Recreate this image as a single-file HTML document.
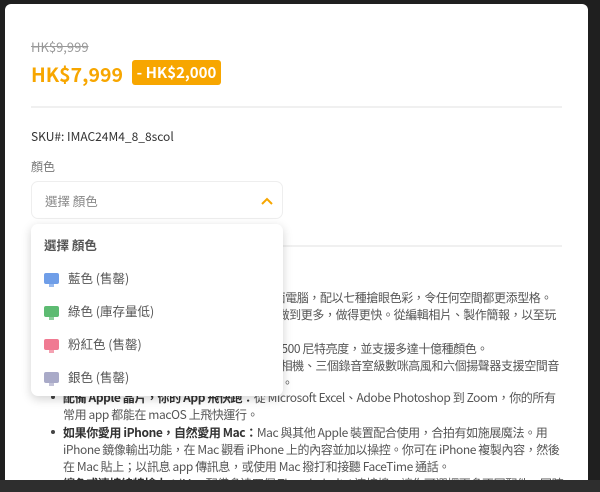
<!DOCTYPE html>
<html><head><meta charset="utf-8"><style>
*{margin:0;padding:0;box-sizing:border-box}
body{width:600px;height:492px;background:#1f1f1f;position:relative;overflow:hidden;font-family:"Noto Sans CJK TC","Liberation Sans",sans-serif}
.bot{position:absolute;left:0;top:480px;width:600px;height:12px;background:#2e2e2e}
.card{position:absolute;left:5px;top:4px;width:583px;height:476px;background:#fff;border-radius:6px 6px 0 0;overflow:hidden}
.a{position:absolute;white-space:nowrap;line-height:17px}
.t{font-size:12px;letter-spacing:-0.4px;color:#555;line-height:17px}
.t b{font-weight:bold;color:#333}
.hr{position:absolute;height:2px;background:#f0f0f0}
.dd{position:absolute;left:26px;top:220px;width:252px;height:172px;background:#fff;border-radius:7px;box-shadow:0 3px 10px rgba(0,0,0,.18)}
.it{position:absolute;left:13px;font-size:12.5px;color:#555;line-height:17px}
.ic{display:inline-block;width:15px;height:11px;border-radius:2px;vertical-align:-1px;margin-right:9px;position:relative}
.ic:after{content:"";position:absolute;left:5px;top:11px;width:5px;height:3px;background:inherit;opacity:.7}
.dot{position:absolute;left:46px;width:4px;height:4px;border-radius:50%;background:#444}
</style></head><body>
<div class="bot"></div>
<div class="card">
<div class="a" style="left:26px;top:34px;font-size:13px;color:#999;text-decoration:line-through">HK$9,999</div>
<div class="a" style="left:26px;top:58px;font-size:19.5px;line-height:24px;font-weight:bold;color:#f7a600">HK$7,999</div>
<div class="a" style="left:127px;top:56px;width:89px;height:25px;background:#f7a600;border-radius:3px;color:#fff;font-size:15px;font-weight:bold;text-align:center;line-height:25px">- HK$2,000</div>
<div class="hr" style="left:26px;top:102px;width:531px"></div>
<div class="a" style="left:26px;top:124px;font-size:12px;color:#333">SKU#: IMAC24M4_8_8scol</div>
<div class="a" style="left:26px;top:154px;font-size:12px;color:#777">顏色</div>
<div class="a" style="left:26px;top:177px;width:252px;height:38px;border:1px solid #eee;border-radius:7px"></div>
<div class="a" style="left:40px;top:188px;font-size:12.5px;color:#888">選擇 顏色</div>
<svg class="a" style="left:256px;top:193px" width="12" height="8" viewBox="0 0 12 8"><path d="M1 7L6 2L11 7" stroke="#f7a600" stroke-width="2" fill="none"/></svg>
<div class="hr" style="left:278px;top:241px;width:279px"></div>
<div class="a t" style="right:36px;top:285px">款時尚纖薄的 iMac 桌面電腦，配以七種搶眼色彩，令任何空間都更添型格。</div>
<div class="a t" style="right:32px;top:302px">M4 晶片幫你輕鬆做到更多，做得更快。從編輯相片、製作簡報，以至玩</div>
<div class="a t" style="right:100px;top:336px">4.5K Retina 顯示器具備 500 尼特亮度，並支援多達十億種顏色。</div>
<div class="a t" style="right:29px;top:353px">12MP Center Stage 相機、三個錄音室級數咪高風和六個揚聲器支援空間音</div>
<div class="a t" style="left:230px;top:370px">效的視聽。</div>
<div class="dot" style="top:391px"></div>
<div class="a t" style="left:58px;top:385px"><b>配備 Apple 晶片，你的 App 飛快跑：</b>從 Microsoft Excel、Adobe Photoshop 到 Zoom，你的所有</div>
<div class="a t" style="left:58px;top:402px">常用 app 都能在 macOS 上飛快運行。</div>
<div class="dot" style="top:426px"></div>
<div class="a t" style="left:58px;top:420px"><b>如果你愛用 iPhone，自然愛用 Mac：</b>Mac 與其他 Apple 裝置配合使用，合拍有如施展魔法。用</div>
<div class="a t" style="left:58px;top:437px">iPhone 鏡像輸出功能，在 Mac 觀看 iPhone 上的內容並加以操控。你可在 iPhone 複製內容，然後</div>
<div class="a t" style="left:58px;top:454px">在 Mac 貼上；以訊息 app 傳訊息，或使用 Mac 撥打和接聽 FaceTime 通話。</div>
<div class="dot" style="top:478px"></div>
<div class="a t" style="left:58px;top:471px"><b>繽色或連接線特搶上：</b>iMac 配備多達四個 Thunderbolt 4 連接埠，讓你可選擇更多不同配件，同時</div>
<div class="dd">
<div class="it" style="top:12px;font-weight:bold;color:#555">選擇 顏色</div>
<div class="it" style="top:45px"><span class="ic" style="background:#6f9ee8"></span>藍色 (售罄)</div>
<div class="it" style="top:78px"><span class="ic" style="background:#5dbb72"></span>綠色 (庫存量低)</div>
<div class="it" style="top:111px"><span class="ic" style="background:#f07a92"></span>粉紅色 (售罄)</div>
<div class="it" style="top:144px"><span class="ic" style="background:#a9aac8"></span>銀色 (售罄)</div>
</div>
</div>
</body></html>
